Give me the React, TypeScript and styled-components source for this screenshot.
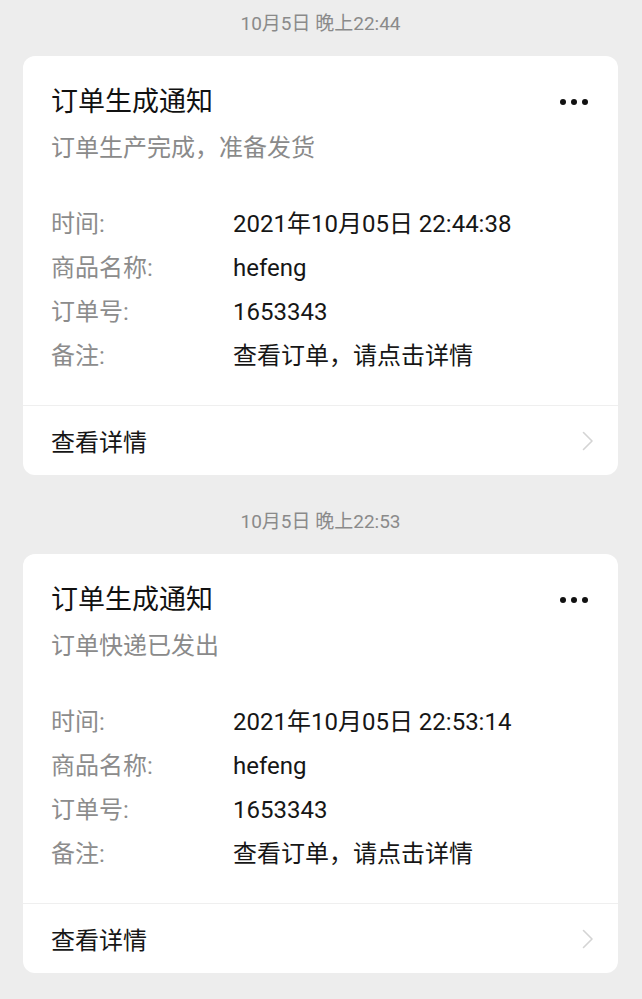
import React from "react";
import styled, { createGlobalStyle } from "styled-components";

const GlobalStyle = createGlobalStyle`
  html, body {
    margin: 0;
    padding: 0;
    background: #ededed;
  }
  body {
    font-family: "Roboto", "Noto Sans CJK SC", sans-serif;
    -webkit-font-smoothing: antialiased;
  }
  * { box-sizing: border-box; }
`;

const Page = styled.div`
  min-height: 999px;
  padding: 12px 24px 0 23px;
  display: flex;
  flex-direction: column;
`;

const Timestamp = styled.div`
  text-align: center;
  font-size: 19px;
  line-height: 24px;
  color: #8a8a8a;
  margin-bottom: 20px;
`;

const Card = styled.div`
  background: #ffffff;
  border-radius: 12px;
  margin-bottom: 35px;
  overflow: hidden;
`;

const Body = styled.div`
  padding: 28px 30px 27px 28px;
`;

const Header = styled.div`
  display: flex;
  align-items: center;
  justify-content: space-between;
`;

const Title = styled.div`
  font-size: 27px;
  line-height: 36px;
  color: #111111;
`;

const Dots = styled.div`
  display: flex;
  gap: 5px;
  align-items: center;
`;

const Dot = styled.span`
  width: 6px;
  height: 6px;
  border-radius: 50%;
  background: #111111;
`;

const Subtitle = styled.div`
  margin-top: 10px;
  font-size: 24px;
  line-height: 36px;
  color: #8a8a8a;
`;

const Fields = styled.div`
  margin-top: 36px;
  display: flex;
  flex-direction: column;
`;

const Row = styled.div`
  display: grid;
  grid-template-columns: 182px 1fr;
  font-size: 24px;
  line-height: 44px;
`;

const Label = styled.span`
  color: #8c8c8c;
`;

const Value = styled.span`
  color: #161616;
`;

const Footer = styled.div`
  border-top: 1px solid #efefef;
  height: 70px;
  padding: 0 24px 0 28px;
  display: flex;
  align-items: center;
  justify-content: space-between;
`;

const FooterText = styled.span`
  font-size: 24px;
  color: #161616;
`;

const Chevron = () => (
  <svg width="12" height="20" viewBox="0 0 12 20" fill="none">
    <path d="M1.5 1.5 L10 10 L1.5 18.5" stroke="#d4d4d4" strokeWidth="1.6" strokeLinecap="round" strokeLinejoin="round" />
  </svg>
);

type Msg = {
  stamp: string;
  subtitle: string;
  time: string;
};

const messages: Msg[] = [
  { stamp: "10月5日 晚上22:44", subtitle: "订单生产完成，准备发货", time: "2021年10月05日 22:44:38" },
  { stamp: "10月5日 晚上22:53", subtitle: "订单快递已发出", time: "2021年10月05日 22:53:14" },
];

export default function App() {
  return (
    <>
      <GlobalStyle />
      <Page>
        {messages.map((m) => (
          <React.Fragment key={m.stamp}>
            <Timestamp>{m.stamp}</Timestamp>
            <Card>
              <Body>
                <Header>
                  <Title>订单生成通知</Title>
                  <Dots>
                    <Dot />
                    <Dot />
                    <Dot />
                  </Dots>
                </Header>
                <Subtitle>{m.subtitle}</Subtitle>
                <Fields>
                  <Row><Label>时间:</Label><Value>{m.time}</Value></Row>
                  <Row><Label>商品名称:</Label><Value>hefeng</Value></Row>
                  <Row><Label>订单号:</Label><Value>1653343</Value></Row>
                  <Row><Label>备注:</Label><Value>查看订单，请点击详情</Value></Row>
                </Fields>
              </Body>
              <Footer>
                <FooterText>查看详情</FooterText>
                <Chevron />
              </Footer>
            </Card>
          </React.Fragment>
        ))}
      </Page>
    </>
  );
}
